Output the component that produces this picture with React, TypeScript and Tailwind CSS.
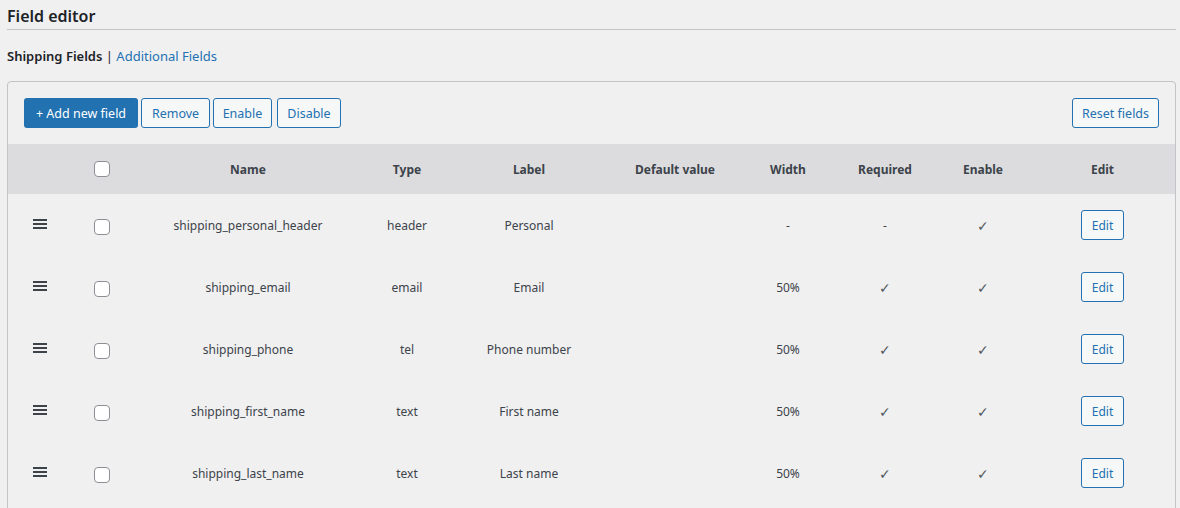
import React from "react";

const rows = [
  { name: "shipping_personal_header", type: "header", label: "Personal", width: "-", required: "-", enable: true },
  { name: "shipping_email", type: "email", label: "Email", width: "50%", required: "✓", enable: true },
  { name: "shipping_phone", type: "tel", label: "Phone number", width: "50%", required: "✓", enable: true },
  { name: "shipping_first_name", type: "text", label: "First name", width: "50%", required: "✓", enable: true },
  { name: "shipping_last_name", type: "text", label: "Last name", width: "50%", required: "✓", enable: true },
];

const cols = "grid grid-cols-[64px_60px_232px_86px_158px_134px_92px_102px_94px_1fr] items-center";

function Checkbox() {
  return <span className="block w-4 h-4 rounded-[4px] border border-[#8c8f94] bg-white" />;
}

function Drag() {
  return (
    <svg width="14" height="12" viewBox="0 0 14 12" className="block">
      <rect x="0" y="1" width="14" height="2" fill="#3c434a" />
      <rect x="0" y="5" width="14" height="2" fill="#3c434a" />
      <rect x="0" y="9" width="14" height="2" fill="#3c434a" />
    </svg>
  );
}

function SecBtn({ children, w }: { children: React.ReactNode; w: string }) {
  return (
    <button className={`h-[30px] ${w} pt-[2px] rounded-[3px] border border-[#2271b1] bg-[#f6f7f7] text-[#2271b1] text-[12.5px] leading-none`}>
      {children}
    </button>
  );
}

function Check() {
  return <span className="text-[14px] font-light text-[#50575e]" style={{ fontFamily: '"DejaVu Sans", sans-serif' }}>✓</span>;
}

export default function App() {
  return (
    <div className="h-[508px] bg-[#f0f0f1] text-[#3c434a] pl-[7px] pr-[4px] pt-[4px] overflow-hidden" style={{ fontFamily: '"Noto Sans", "Open Sans", sans-serif' }}>
      <h1 className="text-[16px] font-semibold text-[#1d2327] leading-[24px] pb-[1px]">Field editor</h1>
      <div className="border-b border-[#c3c4c7]" />
      <div className="mt-[16px] text-[13px] leading-[20px]">
        <span className="font-semibold text-[#1d2327]">Shipping Fields</span>
        <span className="text-[#1d2327]"> | </span>
        <span className="text-[#2271b1]">Additional Fields</span>
      </div>
      <div className="mt-[15px] border border-[#c3c4c7] rounded-[4px] bg-[#f0f0f1] pb-[40px]">
        <div className="flex items-center px-[16px] pt-[16px] pb-[16px]">
          <div className="flex">
            <button className="h-[30px] w-[114px] pt-[2px] rounded-[3px] bg-[#2271b1] text-white text-[12.5px] leading-none">+ Add new field</button>
            <span className="ml-[3px]"><SecBtn w="w-[69px]">Remove</SecBtn></span>
            <span className="ml-[3px]"><SecBtn w="w-[59px]">Enable</SecBtn></span>
            <span className="ml-[5px]"><SecBtn w="w-[64px]">Disable</SecBtn></span>
          </div>
          <div className="ml-auto">
            <SecBtn w="w-[87px]">Reset fields</SecBtn>
          </div>
        </div>
        <div className={`${cols} h-[50px] bg-[#dcdcde] text-[12px] font-bold text-[#3c434a]`}>
          <div />
          <div className="flex justify-center"><Checkbox /></div>
          <div className="text-center pt-[2px]">Name</div>
          <div className="text-center pt-[2px]">Type</div>
          <div className="text-center pt-[2px]">Label</div>
          <div className="text-center pt-[2px]">Default value</div>
          <div className="text-center pt-[2px]">Width</div>
          <div className="text-center pt-[2px]">Required</div>
          <div className="text-center pt-[2px]">Enable</div>
          <div className="text-center pt-[2px]">Edit</div>
        </div>
        {rows.map((r) => (
          <div key={r.name} className={`${cols} h-[62px] text-[12px] text-[#3c434a]`}>
            <div className="flex justify-center -mt-[3px]"><Drag /></div>
            <div className="flex justify-center mt-[3px]"><Checkbox /></div>
            <div className="text-center pt-[2px]">{r.name}</div>
            <div className="text-center pt-[2px]">{r.type}</div>
            <div className="text-center pt-[2px]">{r.label}</div>
            <div className="text-center"></div>
            <div className="text-center pt-[2px]">{r.width}</div>
            <div className="text-center pt-[2px]">{r.required === "✓" ? <Check /> : r.required}</div>
            <div className="text-center pt-[2px]">{r.enable ? <Check /> : ""}</div>
            <div className="flex justify-center">
              <button className="h-[30px] w-[43px] pt-[2px] rounded-[3px] border border-[#2271b1] bg-[#f6f7f7] text-[#2271b1] text-[12px] leading-none">Edit</button>
            </div>
          </div>
        ))}
      </div>
    </div>
  );
}
